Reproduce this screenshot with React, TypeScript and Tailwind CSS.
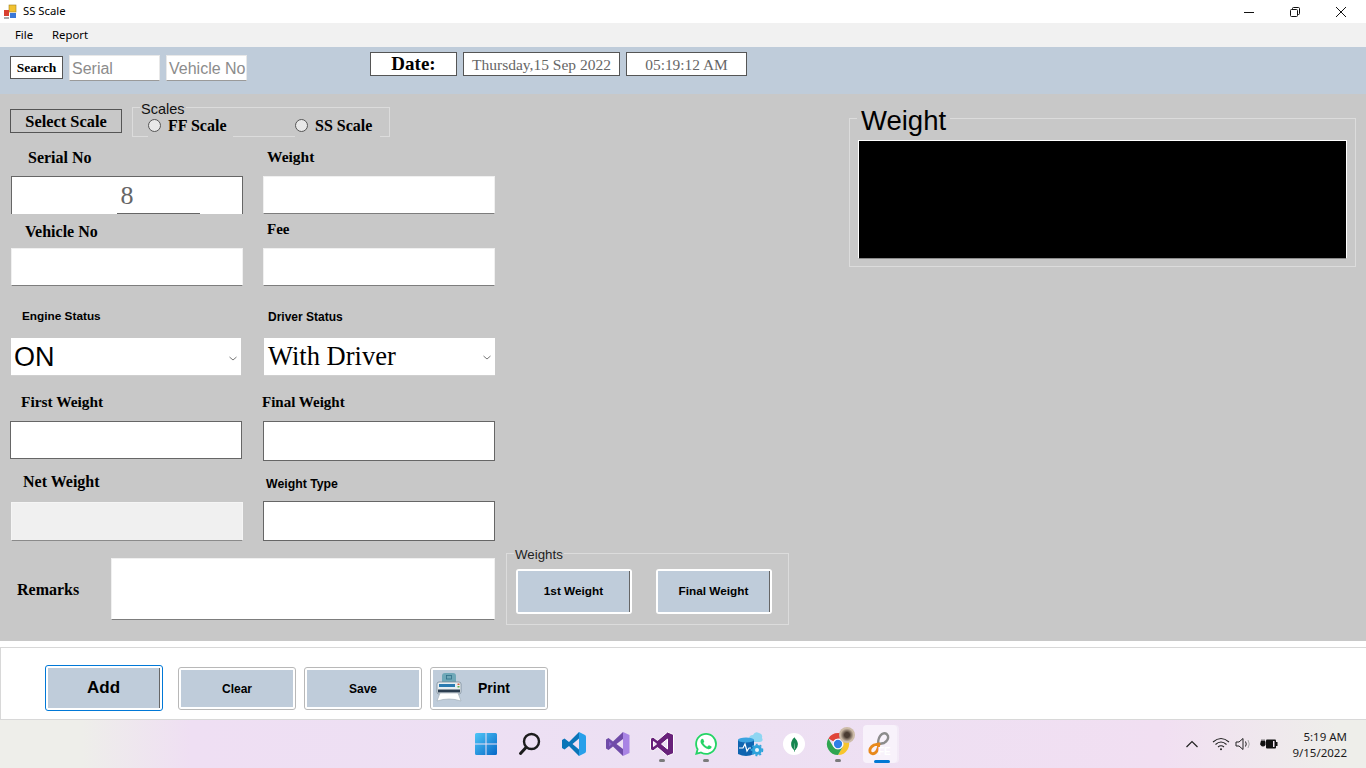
import React from "react"
import { SiMongodb, SiWhatsapp } from "react-icons/si"

const serif = "font-['Liberation_Serif',serif]"
const sans = "font-['Liberation_Sans',sans-serif]"

function TextBox({ className = "" }: { className?: string }) {
  return (
    <input
      readOnly
      className={`block border border-[#f0f0f0] border-b-[#7d7d7d] bg-white outline-none ${className}`}
    />
  )
}

function OutlineBox({ className = "" }: { className?: string }) {
  return (
    <input
      readOnly
      className={`block border border-[#666] bg-white outline-none ${className}`}
    />
  )
}

function Combo({ text, className }: { text: string; className: string }) {
  return (
    <div className={`flex items-center justify-between border-b border-[#cfcfcf] bg-white pr-[2px] text-black ${className}`}>
      <span>{text}</span>
      <svg width="12" height="12" viewBox="0 0 12 12" fill="none" stroke="#777" strokeWidth="1">
        <path d="M2.500 5 L6 8 L9.500 5" />
      </svg>
    </div>
  )
}

function Radio({ label, className }: { label: string; className: string }) {
  return (
    <div className={`-mb-px flex h-[23px] items-end gap-[7px] bg-[#c8c8c8] pb-[2px] ${className}`}>
      <span className="mb-[3px] h-[13px] w-[13px] rounded-full border border-[#555] bg-[#e8e8e8]" />
      <span className={`${serif} text-[16px] leading-[18px] font-bold text-black`}>{label}</span>
    </div>
  )
}

function FaceButton({ label, className, labelClass, focused }: { label: string; className: string; labelClass: string; focused?: boolean }) {
  return (
    <button
      className={`rounded-[3px] border bg-white p-[2px] ${focused ? "border-[#0078d7]" : "border-[#b8b8b8]"} ${className}`}
    >
      <span className={`flex h-full w-full items-center justify-center bg-[#bfccda] ${sans} font-bold text-black ${focused ? "border-r border-[#666]" : ""} ${labelClass}`}>
        {label}
      </span>
    </button>
  )
}

function PrinterIcon() {
  return (
    <svg width="28" height="32" viewBox="0 0 28 32">
      <rect x="7" y="1" width="14" height="12" rx="3" fill="#6fa8b8" />
      <rect x="11.500" y="3.500" width="5" height="3.500" fill="none" stroke="#2f6f88" strokeWidth="0.800" />
      <rect x="2" y="10" width="24" height="12" rx="2" fill="#e8eef2" stroke="#7b8c98" strokeWidth="0.800" />
      <rect x="4" y="12" width="16" height="3" fill="#2a7ab0" />
      <rect x="22.500" y="11.500" width="2" height="1.500" fill="#d45f3c" />
      <rect x="22.500" y="14" width="2" height="1.500" fill="#62b048" />
      <rect x="3" y="17.500" width="22" height="3" fill="#2c3e50" />
      <path d="M5 21 H23 L26 29 Q14 25 2 29 Z" fill="#ffffff" stroke="#9aa8b2" strokeWidth="0.600" />
    </svg>
  )
}

function WindowsLogo() {
  return (
    <svg width="24" height="24" viewBox="0 0 24 24">
      <defs>
        <linearGradient id="win" x1="0" y1="0" x2="1" y2="1">
          <stop offset="0" stopColor="#4fc6f7" />
          <stop offset="1" stopColor="#0668c7" />
        </linearGradient>
      </defs>
      <path fill="url(#win)" d="M1 2.500 Q1 1 2.500 1 H11.500 V11.500 H1 Z M12.500 1 H21.500 Q23 1 23 2.500 V11.500 H12.500 Z M1 12.500 H11.500 V23 H2.500 Q1 23 1 21.500 Z M12.500 12.500 H23 V21.500 Q23 23 21.500 23 H12.500 Z" />
    </svg>
  )
}

function SearchIcon() {
  return (
    <svg width="24" height="24" viewBox="0 0 24 24" fill="none" stroke="#1c1c1c" strokeLinecap="round">
      <circle cx="13.500" cy="9.500" r="7.500" strokeWidth="2.400" />
      <path d="M8 15.500 L2.500 21.500" strokeWidth="3" />
    </svg>
  )
}

function VsCodeIcon() {
  return (
    <svg width="26" height="26" viewBox="0 0 26 26">
      <path fill="#0a75b8" d="M18 1 L8 11 L3.500 7.500 L1 9 V17 L3.500 18.500 L8 15 L18 25 L18 18.500 L11.500 13 L18 7.500 Z" />
      <path fill="#28a0ea" d="M18 1 L24 4 Q25 4.500 25 6 V20 Q25 21.500 24 22 L18 25 Z" />
    </svg>
  )
}

function VsLightIcon() {
  return (
    <svg width="26" height="26" viewBox="0 0 26 26">
      <path fill="#6f4ba8" d="M18 1 L8 10.500 L3.500 7 L1 8.500 V17.500 L3.500 19 L8 15.500 L18 25 V18 L11.500 13 L18 8 Z" />
      <path fill="#a984e4" d="M18 1 L24.500 4 V22 L18 25 Z" />
      <path fill="#8a63cc" d="M4 10.500 L7 13 L4 15.500 Z" />
    </svg>
  )
}

function VsDarkIcon() {
  return (
    <svg width="26" height="26" viewBox="0 0 26 26">
      <path fill="#68217a" fillRule="evenodd" stroke="#fff" strokeWidth="1" d="M18.500 1 L24.500 3.500 V22.500 L18.500 25 L8.500 16.500 L4 20 L1.500 18.500 V7.500 L4 6 L8.500 9.500 Z M18.500 8 L12.500 13 L18.500 18 Z M4.500 10.500 V15.500 L7.500 13 Z" />
    </svg>
  )
}

function DataStudioIcon() {
  return (
    <svg width="28" height="28" viewBox="0 0 28 28">
      <path fill="#8fd6f2" d="M13 9 Q13 5 17 5 Q19 1 23 3 Q27 4 26 8 Q28 11 24 12 H15 Q13 12 13 9 Z" />
      <path fill="#0f64b0" d="M2 10 Q10 6 18 10 V24 Q10 28 2 24 Z" />
      <ellipse cx="10" cy="10" rx="8" ry="2.500" fill="#3ba3e0" />
      <path fill="none" stroke="#fff" strokeWidth="1.200" d="M3 18 H7 L9 14 L11 21 L13 18 H15" />
      <circle cx="21" cy="20" r="5" fill="#2fa4dc" />
      <circle cx="21" cy="20" r="5.500" fill="none" stroke="#2fa4dc" strokeWidth="1.600" strokeDasharray="2 2" />
      <circle cx="21" cy="20" r="2" fill="#eaf4fa" />
    </svg>
  )
}

function ChromeIcon() {
  return (
    <svg width="24" height="24" viewBox="0 0 26 26">
      <path fill="#e0453a" d="M13 1 A12 12 0 0 1 23.400 7 H13 A6 6 0 0 0 7.800 10 L2.600 7 A12 12 0 0 1 13 1 Z" />
      <path fill="#f8c52c" d="M23.400 7 A12 12 0 0 1 13 25 L18.200 16 A6 6 0 0 0 18.200 10 Z" />
      <path fill="#2fa550" d="M13 25 A12 12 0 0 1 2.600 7 L7.800 16 A6 6 0 0 0 18.200 16 Z" />
      <circle cx="13" cy="13" r="5.500" fill="#fff" />
      <circle cx="13" cy="13" r="4.500" fill="#2f7fe6" />
    </svg>
  )
}

function AppTileIcon() {
  return (
    <svg width="28" height="28" viewBox="0 0 28 28" fill="none" strokeLinecap="round">
      <path stroke="#8c8c8c" strokeWidth="2.400" d="M13 14 L18 13 Q23 10 22 6 Q20 2 16 4 Q12 7 12 14" />
      <path stroke="#e8891c" strokeWidth="2.800" d="M12 14 L8 15 Q3 18 4 22 Q6 25 9 23 Q12 21 13 14" />
      <text x="12" y="25" fontSize="10" fontWeight="700" fill="#fff" className={sans}>FE</text>
    </svg>
  )
}

function TaskIcon({ children, dot }: { children: React.ReactNode; dot?: boolean }) {
  return (
    <div className="relative flex h-[48px] w-[44px] items-center justify-center">
      {children}
      {dot && <span className="absolute bottom-[6px] left-[19px] h-[3px] w-[6px] rounded-full bg-[#7b7b7b]" />}
    </div>
  )
}

function Taskbar() {
  return (
    <div className="grid h-[48px] grid-cols-[1fr_auto_1fr] bg-[linear-gradient(90deg,#eeeeea_0%,#eeeeea_6%,#efdff3_14%,#ece0f3_50%,#f1dff2_85%,#eeeeea_98%)]">
      <div />
      <div className="mr-[5px] flex items-center">
        <TaskIcon><WindowsLogo /></TaskIcon>
        <TaskIcon><SearchIcon /></TaskIcon>
        <TaskIcon><VsCodeIcon /></TaskIcon>
        <TaskIcon><VsLightIcon /></TaskIcon>
        <TaskIcon dot><VsDarkIcon /></TaskIcon>
        <TaskIcon dot>
          <span className="flex h-[22px] w-[22px] items-center justify-center rounded-full bg-white">
            <SiWhatsapp className="text-[#25d366]" size={22} />
          </span>
        </TaskIcon>
        <TaskIcon><DataStudioIcon /></TaskIcon>
        <TaskIcon>
          <span className="flex h-[22px] w-[22px] items-center justify-center rounded-full bg-white">
            <SiMongodb className="text-[#13854e]" size={15} />
          </span>
        </TaskIcon>
        <TaskIcon dot>
          <ChromeIcon />
          <span className="absolute top-[7px] left-[23px] h-[16px] w-[16px] rounded-full bg-[radial-gradient(circle_at_50%_50%,#4a3c32_22%,#cdbca8_58%)]" />
        </TaskIcon>
        <div className="relative ml-[3px] flex h-[38px] w-[34px] items-center justify-center rounded-[4px] bg-[#f8f2fb] shadow-[2px_0_0_#f3eaf7]">
          <AppTileIcon />
          <span className="absolute bottom-0 left-[11px] h-[3px] w-[16px] rounded-full bg-[#0078d4]" />
        </div>
      </div>
      <div className="flex items-center justify-end pr-[19px] font-['Noto_Sans',sans-serif] text-[11.500px] text-[#1b1b1b]">
        <svg width="14" height="10" viewBox="0 0 14 10" fill="none" stroke="#222" strokeWidth="1.200" className="mr-[13px]">
          <path d="M1.500 8 L7 2.500 L12.500 8" />
        </svg>
        <svg width="18" height="14" viewBox="0 0 18 14" fill="none" stroke="#222" strokeWidth="1.100" className="mr-[5px]">
          <path d="M1 5 Q9 -2 17 5 M3.500 7.500 Q9 2.500 14.500 7.500 M6 10 Q9 7.500 12 10" />
          <circle cx="9" cy="12.300" r="1" fill="#222" stroke="none" />
        </svg>
        <svg width="18" height="14" viewBox="0 0 18 14" fill="none" stroke="#222" strokeWidth="1" className="mr-[7px]">
          <path d="M1 5 H4 L8 1.500 V12.500 L4 9 H1 Z" />
          <path d="M10.500 4.500 Q12 7 10.500 9.500" />
          <path d="M13 3 Q15.500 7 13 11" stroke="#aaa" />
        </svg>
        <svg width="18" height="12" viewBox="0 0 18 12" className="mr-[14px]">
          <rect x="6" y="1.500" width="10" height="9" rx="1" fill="#111" />
          <rect x="13" y="3" width="1.500" height="6" fill="#f0e4f0" />
          <rect x="16" y="4" width="1.500" height="4" fill="#111" />
          <path d="M0 6 H5 M2 1.500 V4 M4 1.500 V4 M1 3.500 H5 V7 Q5 8 3 8 Q1 8 1 7 Z" stroke="#111" strokeWidth="1" fill="#111" />
        </svg>
        <div className="flex flex-col items-end pt-px leading-[16px]">
          <span>5:19 AM</span>
          <span>9/15/2022</span>
        </div>
      </div>
    </div>
  )
}

export default function App() {
  return (
    <div className="flex h-[768px] w-[1366px] flex-col overflow-hidden bg-white">
      {/* title bar */}
      <div className="flex h-[23px] items-center bg-white font-['Noto_Sans',sans-serif] text-[11.300px] text-black">
        <svg width="16" height="16" viewBox="0 0 16 16" className="ml-[3px]">
          <rect x="6" y="1" width="7" height="7" fill="#f2c230" stroke="#a08020" strokeWidth="0.600" />
          <rect x="1" y="6" width="5" height="6" fill="#d84030" />
          <rect x="7" y="9" width="6" height="5" fill="#3a78d8" />
          <rect x="1" y="13" width="5" height="2" fill="#aaa" />
        </svg>
        <span className="ml-[4px]">SS Scale</span>
        <div className="ml-auto flex items-center">
          <svg width="12" height="12" viewBox="0 0 12 12" stroke="#111" className="mr-[34px]">
            <path d="M1 6.500 H11" />
          </svg>
          <svg width="12" height="12" viewBox="0 0 12 12" fill="none" stroke="#111" className="mr-[34px]">
            <rect x="1.500" y="3.500" width="7" height="7" rx="1" />
            <path d="M3.500 3.500 V2.500 Q3.500 1.500 4.500 1.500 H9.500 Q10.500 1.500 10.500 2.500 V7.500 Q10.500 8.500 9.500 8.500 H8.500" />
          </svg>
          <svg width="12" height="12" viewBox="0 0 12 12" stroke="#111" className="mr-[19px]">
            <path d="M1 1 L11 11 M11 1 L1 11" />
          </svg>
        </div>
      </div>

      {/* menu */}
      <div className="flex h-[24px] items-center gap-[19px] bg-[#f1f1f1] pl-[15px] font-['Noto_Sans',sans-serif] text-[11.300px] text-black">
        <span>File</span>
        <span>Report</span>
      </div>

      {/* search strip */}
      <div className="flex h-[47px] items-start bg-[#bfccda] pl-[10px]">
        <div className={`mt-[9px] flex h-[23px] w-[53px] items-center justify-center border border-[#555] bg-white pt-px ${serif} text-[13.500px] font-bold text-black`}>
          Search
        </div>
        <div className={`mt-[8px] ml-[6px] flex h-[26px] w-[91px] items-center border border-[#e8e8e8] border-b-[#9a9a9a] bg-white pt-[2px] pl-[2px] ${sans} text-[16px] text-[#8c8c8c]`}>
          Serial
        </div>
        <div className={`mt-[8px] ml-[6px] flex h-[26px] w-[81px] items-center overflow-hidden border border-[#e8e8e8] border-b-[#9a9a9a] bg-white pt-[2px] pl-[2px] ${sans} text-[16px] whitespace-nowrap text-[#8c8c8c]`}>
          Vehicle No
        </div>
        <div className={`mt-[5px] ml-[123px] flex h-[24px] w-[87px] items-center justify-center border border-[#555] bg-white ${serif} text-[19px] font-bold text-black`}>
          Date:
        </div>
        <div className={`mt-[5px] ml-[6px] flex h-[24px] w-[157px] items-center justify-center border border-[#555] bg-white pt-[2px] ${serif} text-[15.500px] text-[#666]`}>
          Thursday,15 Sep 2022
        </div>
        <div className={`mt-[5px] ml-[6px] flex h-[24px] w-[121px] items-center justify-center border border-[#555] bg-white pt-[2px] ${serif} text-[15.400px] text-[#666]`}>
          05:19:12 AM
        </div>
      </div>

      {/* main form */}
      <div className="flex h-[547px] bg-[#c8c8c8]">
        <div className={`w-[789px] pl-[10px] ${serif} text-[15px] font-bold text-black`}>
          <div className="mt-[13px] flex h-[30px] items-start">
            <div className="mt-[2px] flex h-[24px] w-[112px] items-center justify-center border border-[#555] pt-[3px] text-[16.400px]">
              Select Scale
            </div>
            <div className="relative ml-[10px] flex h-[30px] w-[258px] items-end border border-[#dcdcdc]">
              <span className={`absolute -top-[6px] left-[7px] bg-[#c8c8c8] px-px ${sans} text-[14.500px] leading-[14px] font-normal text-[#111]`}>Scales</span>
              <Radio label="FF Scale" className="ml-[15px] w-[85px]" />
              <Radio label="SS Scale" className="ml-[62px] w-[85px]" />
            </div>
          </div>

          <div className="mt-[10px] flex">
            <div className="w-[253px]">
              <div className="mb-[9px] ml-[18px] h-[20px] text-[16px] leading-[22px]">Serial No</div>
              <div className={`relative ml-px flex h-[38px] w-[232px] items-center justify-center border border-b-0 border-[#666] bg-white ${serif} text-[26px] font-normal text-[#666]`}>
                8
                <span className="absolute bottom-0 left-[105px] h-px w-[83px] bg-[#666]" />
              </div>
            </div>
            <div>
              <div className="mb-[10px] ml-[4px] h-[19px] text-[15.500px] leading-[19px]">Weight</div>
              <TextBox className="h-[38px] w-[232px]" />
            </div>
          </div>

          <div className="mt-[7px] flex">
            <div className="w-[253px]">
              <div className="mb-[7px] ml-[15px] h-[20px] text-[16px] leading-[22px]">Vehicle No</div>
              <TextBox className="ml-px h-[38px] w-[232px]" />
            </div>
            <div>
              <div className="mb-[13px] ml-[4px] h-[14px] leading-[16px]">Fee</div>
              <TextBox className="h-[38px] w-[232px]" />
            </div>
          </div>

          <div className="mt-[21px] flex">
            <div className="w-[253px]">
              <div className={`mb-[13px] ml-[12px] h-[18px] ${sans} text-[11.800px] leading-[18px]`}>Engine Status</div>
              <Combo text="ON" className={`ml-px h-[38px] w-[230px] pt-[2px] pl-[3px] ${sans} text-[27px] font-normal`} />
            </div>
            <div>
              <div className={`mb-[11px] ml-[5px] h-[20px] ${sans} text-[12px] leading-[20px]`}>Driver Status</div>
              <Combo text="With Driver" className={`ml-px h-[38px] w-[231px] pt-px pl-[4px] ${serif} text-[26.500px] font-normal`} />
            </div>
          </div>

          <div className="mt-[15px] flex">
            <div className="w-[253px]">
              <div className="mb-[10px] ml-[11px] h-[20px] text-[15.400px] leading-[22px]">First Weight</div>
              <OutlineBox className="h-[38px] w-[232px]" />
            </div>
            <div>
              <div className="mb-[10px] -ml-px h-[20px] leading-[22px]">Final Weight</div>
              <OutlineBox className="h-[40px] w-[232px]" />
            </div>
          </div>

          <div className="mt-[10px] flex">
            <div className="w-[253px]">
              <div className="mb-[11px] ml-[13px] h-[20px] text-[16px] leading-[22px]">Net Weight</div>
              <input readOnly className="ml-px block h-[39px] w-[232px] border border-[#f5f5f5] border-b-[#8a8a8a] bg-[#f0f0f0] outline-none" />
            </div>
            <div>
              <div className={`mb-[6px] ml-[3px] h-[24px] ${sans} text-[12.300px] leading-[26px]`}>Weight Type</div>
              <OutlineBox className="h-[40px] w-[232px]" />
            </div>
          </div>

          <div className="mt-[12px] flex items-start">
            <div className="mt-[26px] ml-[7px] h-[20px] w-[94px] text-[16px] leading-[22px]">Remarks</div>
            <TextBox className="mt-[5px] h-[62px] w-[384px]" />
            <div className="relative ml-[11px] flex h-[72px] w-[283px] gap-[24px] border border-[#dcdcdc] pt-[15px] pl-[9px]">
              <span className={`absolute -top-[6px] left-[7px] bg-[#c8c8c8] px-px ${sans} text-[13.300px] leading-[14px] font-normal text-[#222]`}>Weights</span>
              <button className="h-[45px] w-[116px] rounded-[3px] bg-white p-[2px]">
                <span className={`flex h-full w-full items-center justify-center border-r border-[#666] bg-[#bfccda] ${sans} text-[11.800px] font-bold text-black`}>1st Weight</span>
              </button>
              <button className="h-[45px] w-[116px] rounded-[3px] bg-white p-[2px]">
                <span className={`flex h-full w-full items-center justify-center border-r border-[#666] bg-[#bfccda] ${sans} text-[11.800px] font-bold text-black`}>Final Weight</span>
              </button>
            </div>
          </div>
        </div>

        <div className="relative mt-[24px] ml-[60px] h-[149px] w-[507px] border border-[#dcdcdc] pt-[21px] pl-[8px]">
          <span className={`absolute -top-[12px] left-[7px] bg-[#c8c8c8] px-[4px] ${sans} text-[27.500px] leading-[28px] text-black`}>Weight</span>
          <div className="h-[119px] w-[489px] border border-white border-b-[#8a8a8a] bg-black" />
        </div>
      </div>

      {/* action buttons */}
      <div className="h-[79px] bg-white pt-[6px]">
        <div className="flex h-[73px] items-start border-y border-l border-[#d8d8d8] bg-white pl-[44px]">
          <FaceButton label="Add" focused className="mt-[17px] h-[46px] w-[118px]" labelClass="text-[17px]" />
          <FaceButton label="Clear" className="mt-[19px] ml-[15px] h-[43px] w-[118px]" labelClass="text-[12px]" />
          <FaceButton label="Save" className="mt-[19px] ml-[8px] h-[43px] w-[118px]" labelClass="text-[12px]" />
          <button className="relative mt-[19px] ml-[8px] h-[43px] w-[118px] rounded-[3px] border border-[#b8b8b8] bg-white p-[2px]">
            <span className={`flex h-full w-full items-center bg-[#bfccda] pl-[45px] ${sans} text-[14px] font-bold text-black`}>Print</span>
            <span className="absolute top-[4px] left-[4px]"><PrinterIcon /></span>
          </button>
        </div>
      </div>

      <Taskbar />
    </div>
  )
}
